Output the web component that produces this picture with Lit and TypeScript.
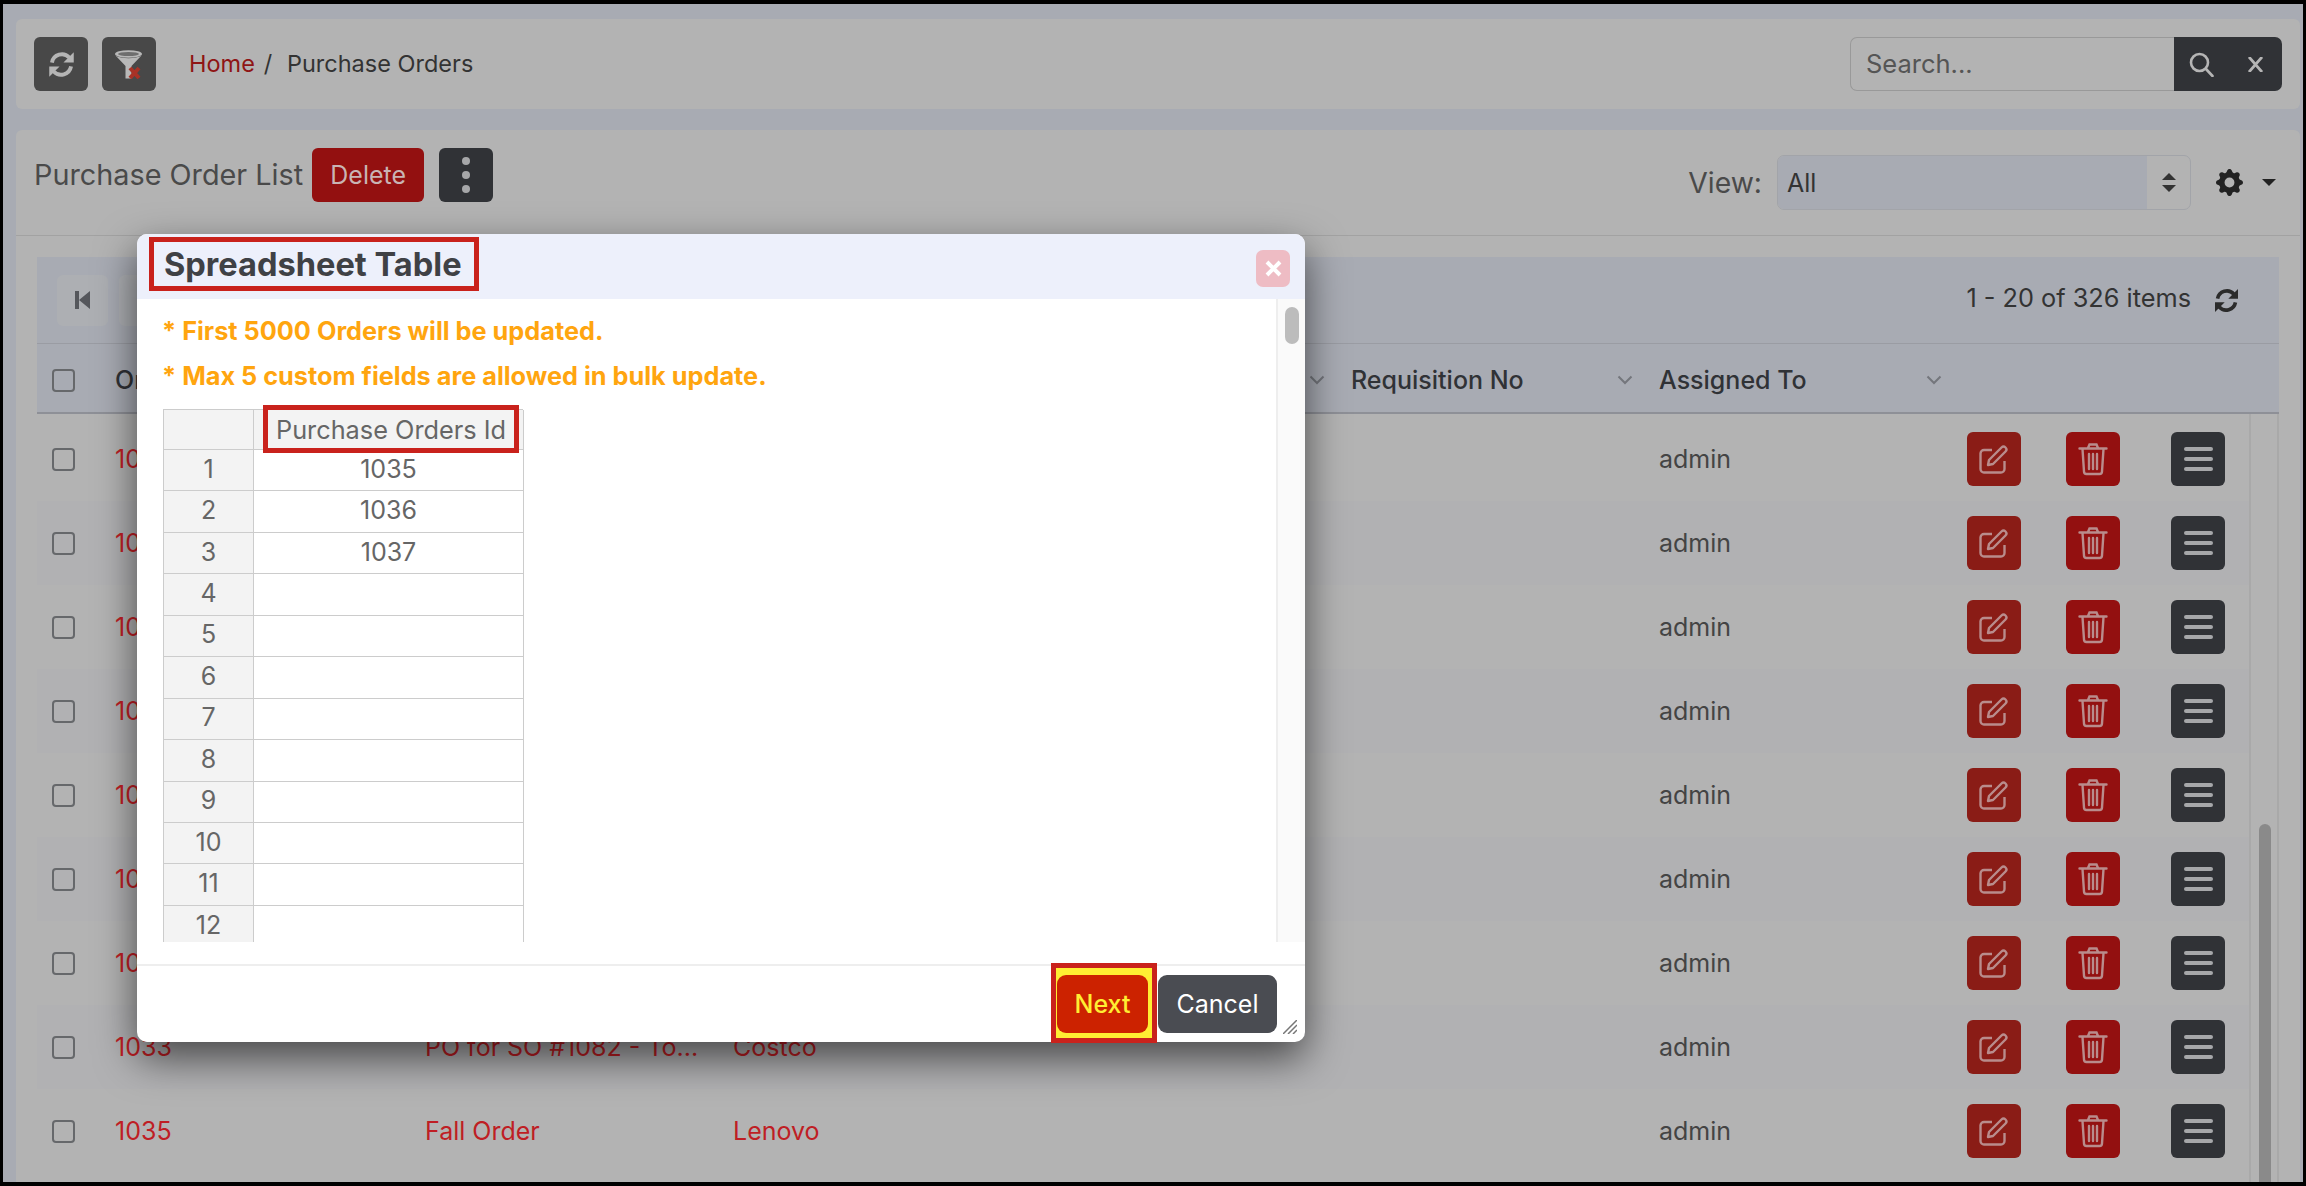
import { LitElement, html, css, svg } from 'lit';
import { customElement } from 'lit/decorators.js';

const syncIcon = svg`<path d="M4.6 10.5A7.8 7.8 0 0 1 18 6.6" fill="none" stroke="currentColor" stroke-width="3"/><path d="M21.5 2.5v8h-8z" fill="currentColor"/><path d="M19.4 13.5A7.8 7.8 0 0 1 6 17.4" fill="none" stroke="currentColor" stroke-width="3"/><path d="M2.5 21.5v-8h8z" fill="currentColor"/>`;

// the dialog covers the title and vendor of every row but the last two
const ORDERS = [
  ['1025', '', ''],
  ['1026', '', ''],
  ['1027', '', ''],
  ['1028', '', ''],
  ['1029', '', ''],
  ['1030', '', ''],
  ['1031', '', ''],
  ['1033', 'PO for SO #1082 - To...', 'Costco'],
  ['1035', 'Fall Order', 'Lenovo'],
];

@customElement('app-root')
export class AppRoot extends LitElement {
  static styles = css`
    :host { display: block; font-family: Inter, "Liberation Sans", sans-serif; font-size: 25px; }
    * { box-sizing: border-box; }
    .frame {
      position: relative;
      width: 2306px;
      height: 1186px;
      padding: 4px 3px;
      background: #000;
      overflow: hidden;
    }
    .page {
      height: 1178px;
      padding: 15px 3px 0 13px;
      background: #a8abb3;
      overflow: hidden;
    }
    .card { background: #b3b3b3; border-radius: 6px; }
    .btn {
      display: flex;
      align-items: center;
      justify-content: center;
      flex-shrink: 0;
      width: 54px;
      height: 54px;
      border-radius: 6px;
      color: #a6a7a9;
    }
    .dark { background: #303236; }
    .grey { background: #484848; color: #b5b5b5; }
    .red { background: #931010; color: #b98c8c; }
    .brown { background: #8a1c16; color: #b98c8c; }

    .nav { display: flex; align-items: center; height: 90px; padding: 0 18px; gap: 14px; }
    .crumbs { margin: 0 0 2px 19px; font-size: 23.5px; color: #333; flex: 1; }
    .crumbs a { color: #8f1515; }
    .crumbs span { margin: 0 8px 0 9px; }
    .search { display: flex; height: 54px; }
    .search-input {
      display: flex;
      align-items: center;
      width: 324px;
      padding: 0 0 2px 15px;
      border: 1px solid #999;
      border-right: 0;
      border-radius: 7px 0 0 7px;
      font-size: 25.5px;
      color: #555;
    }
    .search-btns {
      display: flex;
      align-items: center;
      width: 108px;
      padding-left: 15px;
      gap: 34px;
      border-radius: 0 7px 7px 0;
      background: #303236;
      color: #b5b5b5;
    }

    .list-head {
      display: flex;
      align-items: flex-start;
      height: 106px;
      margin-top: 21px;
      padding: 18px 18px 0;
      border-bottom: 1px solid #a2a2a2;
      border-radius: 6px 6px 0 0;
    }
    .list-title { font-size: 28.8px; line-height: 54px; color: #4a4a4a; white-space: nowrap; margin-right: 9px; }
    .del { width: 112px; color: #c9b4b4; margin-right: 15px; }
    .dots { flex-direction: column; gap: 6px; }
    .dots i { width: 8px; height: 8px; border-radius: 50%; background: #a6a7a9; }
    .view { display: flex; align-items: center; margin-left: auto; height: 55px; margin-top: 7px; }
    .view-label { font-size: 28.3px; color: #4a4a4a; margin-right: 15px; }
    .select {
      display: flex;
      width: 414px;
      height: 55px;
      border: 1px solid #a2a4a9;
      border-radius: 7px;
      overflow: hidden;
      color: #333;
    }
    .select-value { flex: 1; display: flex; align-items: center; padding-left: 9px; background: #a8abb3; }
    .select-arrows {
      display: flex;
      flex-direction: column;
      align-items: center;
      justify-content: center;
      gap: 5px;
      width: 43px;
    }
    .gear { margin-left: 25px; color: #222; }
    .caret { margin-left: 19px; margin-right: 6px; width: 0; height: 0; border: 7px solid transparent; border-top: 7px solid #222; border-bottom: 0; }

    .list-body { height: 1000px; padding: 21px 21px 0; background: #b3b3b3; }
    .pager {
      display: flex;
      align-items: center;
      height: 87px;
      padding: 0 20px;
      gap: 11px;
      background: #a8abb3;
      border-bottom: 1px solid #9a9ca3;
    }
    .page-btn {
      display: flex;
      align-items: center;
      justify-content: center;
      width: 51px;
      height: 51px;
      border-radius: 6px;
      background: #adafb3;
      color: #55575c;
    }
    .count { margin: 0 0 6px auto; font-size: 25.3px; color: #333; white-space: nowrap; }
    .refresh { margin: 0 18px 0 10px; color: #2b2b2b; }
    .row {
      display: grid;
      grid-template-columns: 78px 310px 308px 618px 308px 308px 1fr;
      align-items: center;
    }
    .head { height: 70px; padding-top: 4px; background: #a8abb3; border-bottom: 2px solid #8e9097; font-weight: 500; color: #303236; }
    .head-cell { display: flex; align-items: center; justify-content: flex-end; }
    .head-cell span { margin-right: auto; }
    .head-cell svg { color: #74767c; }
    .req { padding-right: 26px; }
    .asg { padding-right: 25px; }
    .check {
      width: 23px;
      height: 23px;
      margin-left: 15px;
      border: 2px solid #66686b;
      border-radius: 4px;
    }
    .rows-wrap { display: flex; }
    .rows { flex: 1; padding-top: 3px; }
    .data { height: 84px; color: #444; }
    .data:nth-child(even) { background: #b1b1b3; }
    .link { color: #bf1e24; white-space: nowrap; }
    .actions { display: flex; width: 258px; gap: 45px; }
    .actions .bars { margin-left: 6px; }
    .track { width: 30px; padding: 410px 6px 0 8px; border-left: 2px solid #a9a9a9; border-right: 2px solid #a9a9a9; }
    .thumb { height: 400px; border-radius: 8px; background: #8a8a8a; }
    .bars { flex-direction: column; gap: 6px; }
    .bars i { width: 29px; height: 4px; border-radius: 2px; background: #a6a7a9; }

    .dialog {
      position: absolute;
      left: 137px;
      top: 234px;
      display: flex;
      flex-direction: column;
      width: 1168px;
      height: 808px;
      border-radius: 10px;
      background: #fff;
      box-shadow: 0 16px 40px rgba(0, 0, 0, 0.6);
    }
    .dlg-head {
      display: flex;
      justify-content: space-between;
      height: 65px;
      padding: 3px 15px 0 12px;
      border-radius: 10px 10px 0 0;
      background: #edf0fb;
    }
    .dlg-title {
      display: flex;
      align-items: center;
      width: 330px;
      height: 54px;
      padding: 0 10px;
      border: 5px solid #c9221c;
      font-size: 32.6px;
      font-weight: 700;
      color: #3f4145;
      white-space: nowrap;
    }
    .close {
      display: flex;
      align-items: center;
      justify-content: center;
      width: 34px;
      height: 37px;
      margin-top: 13px;
      border-radius: 7px;
      background: #eebcc4;
      color: #fff;
    }
    .dlg-body { display: flex; height: 643px; overflow: hidden; }
    .dlg-content { flex: 1; padding: 9px 0 0 26px; overflow: hidden; }
    .note { height: 45px; margin-left: -1px; line-height: 45px; font-size: 25.3px; font-weight: 700; color: #ffa50f; white-space: nowrap; }
    .sheet {
      display: grid;
      grid-template-columns: 90px 270px;
      grid-template-rows: 40px;
      grid-auto-rows: 41.45px;
      width: 360px;
      margin-top: 11px;
      border-top: 1px solid #ccc;
      border-left: 1px solid #ccc;
      color: #666;
    }
    .cell {
      position: relative;
      display: flex;
      align-items: center;
      justify-content: center;
      padding-bottom: 3px;
      border-right: 1px solid #ccc;
      border-bottom: 1px solid #ccc;
    }
    .cell.side { background: #f3f3f3; }
    .col-mark {
      position: absolute;
      left: 9px;
      right: 4px;
      top: -5px;
      bottom: -4px;
      display: flex;
      align-items: center;
      justify-content: center;
      border: 5px solid #c9221c;
      background: #f3f3f3;
      font-size: 25.3px;
      white-space: nowrap;
    }
    .dlg-track { width: 29px; padding: 8px 6px 0 7px; background: #fafafa; border-left: 2px solid #eee; }
    .dlg-thumb { height: 37px; border-radius: 8px; background: #bcbcbc; }
    .dlg-foot {
      position: relative;
      display: flex;
      justify-content: flex-end;
      align-items: flex-start;
      height: 78px;
      margin-top: 22px;
      padding: 9px 28px 0 0;
      border-top: 2px solid #eee;
      gap: 1px;
    }
    .mark {
      width: 106px;
      height: 80px;
      margin-top: -12px;
      padding: 7px 0 0 1px;
      border: 5px solid #c9221c;
      background: #ffee33;
    }
    .foot-btn {
      display: flex;
      align-items: center;
      justify-content: center;
      height: 58px;
      border-radius: 9px;
    }
    .next { width: 91px; background: #cc2200; color: #ffee33; font-weight: 500; }
    .cancel { width: 119px; background: #4a4c52; color: #fff; }
    .grip { position: absolute; right: 8px; bottom: 8px; color: #777; }
  `;

  private _chevron() {
    return html`<svg width="16" height="10" viewBox="0 0 16 10"><path d="M1.5 1.5 8 8l6.5-6.5" fill="none" stroke="currentColor" stroke-width="2"/></svg>`;
  }

  private _row(o: string[]) {
    return html`
      <div class="row data">
        <div class="check"></div>
        <div class="link">${o[0]}</div>
        <div class="link">${o[1]}</div>
        <div class="link">${o[2]}</div>
        <div></div>
        <div>admin</div>
        <div class="actions">
          <div class="btn brown">
            <svg width="30" height="30" viewBox="0 0 30 30" fill="none" stroke="currentColor" stroke-width="2.4" stroke-linejoin="round">
              <path d="M13 6H5a3.5 3.5 0 0 0-3.5 3.500V25A3.500 3.500 0 0 0 5 28.500h17a3.500 3.500 0 0 0 3.500-3.500v-8"/>
              <path d="M10 16 22.500 3.500a2.800 2.800 0 0 1 4 4L14 20l-5 1z"/>
            </svg>
          </div>
          <div class="btn red">
            <svg width="30" height="34" viewBox="0 0 30 34" fill="none" stroke="currentColor" stroke-width="2.4" stroke-linecap="round">
              <path d="M1.500 6.500h27M10 6l1.500-3.500h7L20 6M4.500 7l1.500 22.500a2.500 2.500 0 0 0 2.500 2.500h13a2.500 2.500 0 0 0 2.500-2.500L25.500 7M11 12v15M15 12v15M19 12v15"/>
            </svg>
          </div>
          <div class="btn dark bars"><i></i><i></i><i></i></div>
        </div>
      </div>
    `;
  }

  private _sheetRows() {
    const vals = ['1035', '1036', '1037'];
    return Array.from({ length: 12 }, (_, i) => html`
      <div class="cell side">${i + 1}</div>
      <div class="cell">${vals[i] ?? ''}</div>
    `);
  }

  render() {
    return html`
      <div class="frame">
        <div class="page">
          <div class="card nav">
            <div class="btn grey">
              <svg width="31" height="31" viewBox="0 0 24 24">${syncIcon}</svg>
            </div>
            <div class="btn grey">
              <svg width="30" height="30" viewBox="0 0 30 30">
                <ellipse cx="14.500" cy="5" rx="13.500" ry="3.800" fill="#b8b8b8"/>
                <ellipse cx="14.500" cy="5" rx="10.500" ry="2" fill="#6e6e6e"/>
                <path d="M1.500 6.500 11.500 17v12.500h6V17l10-10.500C22 10 7 10 1.500 6.500z" fill="#b8b8b8"/>
                <path d="m16 19 9 10M25 19l-9 10" stroke="#a83226" stroke-width="4"/>
              </svg>
            </div>
            <div class="crumbs"><a>Home</a><span>/</span> Purchase Orders</div>
            <div class="search">
              <div class="search-input">Search...</div>
              <div class="search-btns">
                <svg width="25" height="25" viewBox="0 0 25 25" fill="none" stroke="currentColor" stroke-width="2.600" stroke-linecap="round">
                  <circle cx="10.500" cy="10.500" r="8.500"/><path d="m17 17 6.500 7"/>
                </svg>
                <svg width="15" height="15" viewBox="0 0 15 15" stroke="currentColor" stroke-width="2.800">
                  <path d="m1 0 13 15M14 0 1 15"/>
                </svg>
              </div>
            </div>
          </div>

          <div class="card list-head">
            <div class="list-title">Purchase Order List</div>
            <div class="btn red del">Delete</div>
            <div class="btn dark dots"><i></i><i></i><i></i></div>
            <div class="view">
              <div class="view-label">View:</div>
              <div class="select">
                <div class="select-value">All</div>
                <div class="select-arrows">
                  <svg width="14" height="7" viewBox="0 0 14 7"><path d="M7 0l7 7H0z" fill="#333"/></svg>
                  <svg width="14" height="7" viewBox="0 0 14 7"><path d="M7 7l7-7H0z" fill="#333"/></svg>
                </div>
              </div>
              <svg class="gear" width="27" height="27" viewBox="0 0 16 16" fill="currentColor">
                <path d="M9.405 1.05c-.413-1.4-2.397-1.4-2.81 0l-.1.34a1.464 1.464 0 0 1-2.105.872l-.31-.17c-1.283-.698-2.686.705-1.987 1.987l.169.311c.446.82.023 1.841-.872 2.105l-.34.1c-1.4.413-1.4 2.397 0 2.81l.34.1a1.464 1.464 0 0 1 .872 2.105l-.17.31c-.698 1.283.705 2.686 1.987 1.987l.311-.169a1.464 1.464 0 0 1 2.105.872l.1.34c.413 1.4 2.397 1.4 2.81 0l.1-.34a1.464 1.464 0 0 1 2.105-.872l.31.17c1.283.698 2.686-.705 1.987-1.987l-.169-.311a1.464 1.464 0 0 1 .872-2.105l.34-.1c1.4-.413 1.4-2.397 0-2.81l-.34-.1a1.464 1.464 0 0 1-.872-2.105l.17-.31c.698-1.283-.705-2.686-1.987-1.987l-.311.169a1.464 1.464 0 0 1-2.105-.872l-.1-.34zM8 10.930a2.929 2.929 0 1 1 0-5.860 2.929 2.929 0 0 1 0 5.858z"/>
              </svg>
              <div class="caret"></div>
            </div>
          </div>

          <div class="list-body">
            <div class="pager">
              <div class="page-btn">
                <svg width="15" height="18" viewBox="0 0 15 18" fill="currentColor"><path d="M0 0h4v18H0zM15 0v18L4 9z"/></svg>
              </div>
              <div class="page-btn"></div>
              <div class="count">1 - 20 of 326 items</div>
              <svg class="refresh" width="29" height="29" viewBox="0 0 24 24">${syncIcon}</svg>
            </div>
            <div class="row head">
              <div class="check"></div>
              <div>Or</div>
              <div></div>
              <div class="head-cell req">${this._chevron()}</div>
              <div class="head-cell req"><span>Requisition No</span>${this._chevron()}</div>
              <div class="head-cell asg"><span>Assigned To</span>${this._chevron()}</div>
              <div></div>
            </div>
            <div class="rows-wrap">
              <div class="rows">${ORDERS.map(o => this._row(o))}</div>
              <div class="track"><div class="thumb"></div></div>
            </div>
          </div>
        </div>

        <div class="dialog">
          <div class="dlg-head">
            <div class="dlg-title">Spreadsheet Table</div>
            <div class="close">
              <svg width="17" height="17" viewBox="0 0 17 17" stroke="currentColor" stroke-width="4"><path d="m2 2 13 13M15 2 2 15"/></svg>
            </div>
          </div>
          <div class="dlg-body">
            <div class="dlg-content">
              <div class="note">* First 5000 Orders will be updated.</div>
              <div class="note">* Max 5 custom fields are allowed in bulk update.</div>
              <div class="sheet">
                <div class="cell side"></div>
                <div class="cell side"><div class="col-mark">Purchase Orders Id</div></div>
                ${this._sheetRows()}
              </div>
            </div>
            <div class="dlg-track"><div class="dlg-thumb"></div></div>
          </div>
          <div class="dlg-foot">
            <div class="mark"><div class="foot-btn next">Next</div></div>
            <div class="foot-btn cancel">Cancel</div>
            <svg class="grip" width="14" height="14" viewBox="0 0 14 14" stroke="currentColor" stroke-width="1.500">
              <path d="M14 0 0 14M14 5 5 14M14 10l-4 4"/>
            </svg>
          </div>
        </div>
      </div>
    `;
  }
}
